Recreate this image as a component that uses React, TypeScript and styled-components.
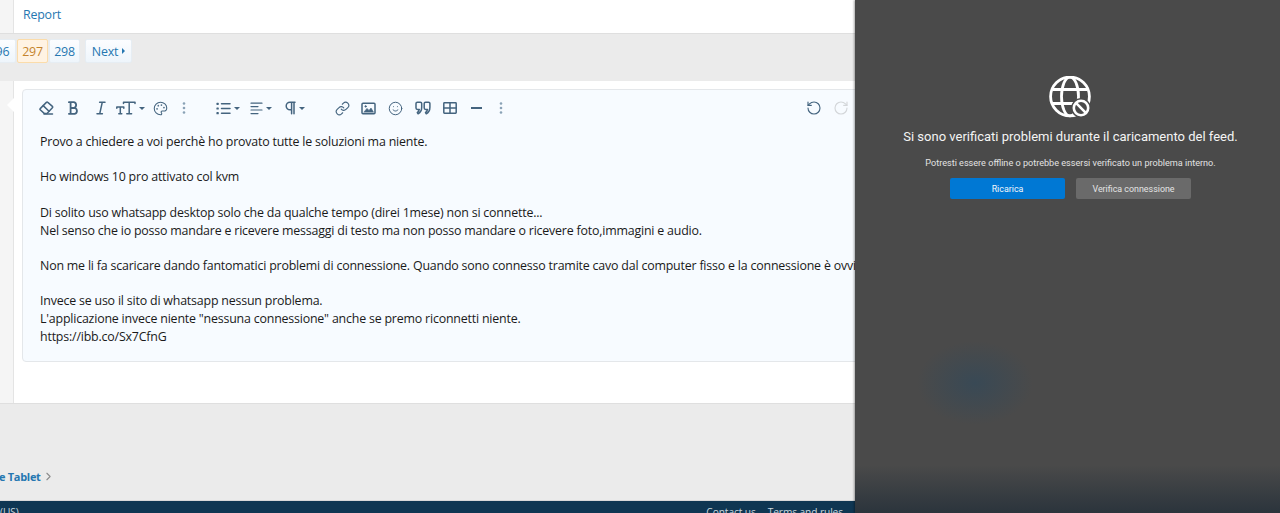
import styled, { createGlobalStyle } from "styled-components";
import { Palette, Link, Smile, RotateCcw, RotateCw, ChevronRight } from "lucide-react";
import type { ReactNode } from "react";

const GlobalStyle = createGlobalStyle`
  html, body {
    margin: 0;
    padding: 0;
    height: 513px;
    overflow: hidden;
    background: #ebebeb;
  }
`;

const Screen = styled.div`
  display: grid;
  grid-template-columns: 855px 425px;
  width: 1280px;
  height: 513px;
  overflow: hidden;
`;

const Forum = styled.div`
  display: flex;
  flex-direction: column;
  height: 513px;
  overflow: hidden;
  font-family: "Open Sans", "Liberation Sans", sans-serif;
  font-size: 12.4px;
  letter-spacing: -0.19px;
  color: #141414;
  background: #ebebeb;
`;

const MessageRow = styled.div<{ $height: number }>`
  display: flex;
  height: ${(p) => p.$height}px;
  flex: none;
  box-sizing: border-box;
  background: #fff;
  border-bottom: 1px solid #dfdfdf;
`;

const UserStrip = styled.div`
  position: relative;
  width: 13px;
  flex: none;
  background: #f5f5f5;
  border-right: 1px solid #e4e4e4;
`;

const Arrow = styled.div`
  position: absolute;
  left: 7px;
  top: 16px;
  width: 0;
  height: 0;
  border-top: 8px solid transparent;
  border-bottom: 8px solid transparent;
  border-right: 8px solid #fff;
`;

const MessageCell = styled.div`
  flex: 1;
  min-width: 0;
  padding: 8px 0 0 8px;
`;

const ReportLink = styled.a`
  display: block;
  margin-left: 1px;
  color: #2577b1;
  line-height: 13px;
`;

const PagerRow = styled.div`
  display: flex;
  height: 47px;
  flex: none;
  box-sizing: border-box;
  padding-top: 5px;
  gap: 4px;
`;

const PageGroup = styled.div`
  display: flex;
  height: 24px;
  margin-left: -18px;
`;

const PageButton = styled.span<{ $active?: boolean; $width: number }>`
  display: flex;
  align-items: center;
  justify-content: center;
  gap: 4px;
  width: ${(p) => p.$width}px;
  height: 24px;
  box-sizing: border-box;
  margin-right: 1px;
  border-radius: 2px;
  color: ${(p) => (p.$active ? "#c5842c" : "#2577b1")};
  background: ${(p) =>
    p.$active ? "#fff3e3" : "linear-gradient(to bottom, #fcfdff, #eef5fb)"};
  border: 1px solid ${(p) => (p.$active ? "#fbdcaa" : "#e6edf3")};
`;

const NextCaret = styled.span`
  width: 0;
  height: 0;
  border-top: 3px solid transparent;
  border-bottom: 3px solid transparent;
  border-left: 3px solid #2577b1;
`;

const EditorBox = styled.div`
  width: 850px;
  height: 273px;
  box-sizing: border-box;
  background: #f7fbff;
  border: 1px solid #e4e7ea;
  border-radius: 4px;
`;

const Toolbar = styled.div`
  display: flex;
  align-items: center;
  width: 821px;
  height: 36px;
  margin-left: 10px;
  color: #44647f;
`;

const ToolButton = styled.span<{ $width: number; $gapBefore?: number; $off?: boolean }>`
  display: flex;
  align-items: center;
  justify-content: center;
  gap: 3px;
  flex: none;
  width: ${(p) => p.$width}px;
  margin-left: ${(p) => p.$gapBefore ?? 0}px;
  color: ${(p) => (p.$off ? "#d3d6d9" : "inherit")};
`;

const ToolSpacer = styled.span`
  flex: 1;
`;

const Caret = styled.span`
  width: 0;
  height: 0;
  border-left: 3px solid transparent;
  border-right: 3px solid transparent;
  border-top: 3px solid currentColor;
`;

const EditorText = styled.div`
  padding: 7px 0 0 17px;
  line-height: 17.7px;
  white-space: pre;
  color: #1a1a1a;
`;

const Filler = styled.div`
  flex: 1;
`;

const Breadcrumb = styled.div`
  display: flex;
  align-items: center;
  height: 34px;
  flex: none;
  padding-bottom: 14px;
  box-sizing: border-box;
  margin-left: -1px;
  font-size: 11px;
  letter-spacing: -0.3px;
  font-weight: 700;
  color: #2577b1;
  svg {
    color: #8c8c8c;
    margin-left: 1px;
  }
`;

const Footer = styled.div`
  display: flex;
  justify-content: space-between;
  height: 9px;
  flex: none;
  padding: 3px 12px 0 0;
  border-top: 1px solid #d8d8d8;
  overflow: hidden;
  background: #0f3652;
  color: #c9d6df;
  font-size: 10.2px;
  letter-spacing: -0.1px;
  line-height: 16px;
`;

const FooterLinks = styled.div`
  display: flex;
  gap: 12px;
`;

const Flyout = styled.div`
  display: flex;
  flex-direction: column;
  align-items: center;
  height: 513px;
  box-sizing: border-box;
  padding: 76px 0 0 6px;
  color: #fff;
  font-family: Roboto, "Liberation Sans", sans-serif;
  box-shadow: -1px 0 2px rgba(0, 0, 0, 0.35);
  background:
    radial-gradient(ellipse 58px 42px at 120px 383px, rgba(40, 72, 96, 0.5), rgba(40, 72, 96, 0) 100%),
    linear-gradient(to bottom, rgba(43, 52, 60, 0) 465px, rgba(43, 52, 60, 1) 513px),
    #4a4a4a;
`;

const Headline = styled.div`
  margin-top: 10px;
  font-size: 13px;
  line-height: 18px;
  color: #f4f4f4;
`;

const Subline = styled.div`
  margin-top: 10px;
  font-size: 9.1px;
  line-height: 14px;
  color: #e2e2e2;
`;

const FeedActions = styled.div`
  display: flex;
  gap: 11px;
  margin-top: 8px;
`;

const FeedButton = styled.span<{ $primary?: boolean }>`
  display: flex;
  align-items: center;
  justify-content: center;
  width: 115px;
  height: 21px;
  border-radius: 2px;
  font-size: 8.9px;
  color: ${(p) => (p.$primary ? "#f2f7fc" : "#e4e4e4")};
  background: ${(p) => (p.$primary ? "#0078d4" : "#6a6a6a")};
`;

const stroke = {
  fill: "none",
  stroke: "currentColor",
  strokeWidth: 1.5,
  strokeLinecap: "round" as const,
  strokeLinejoin: "round" as const,
};

function Glyph({ w = 16, h = 16, children }: { w?: number; h?: number; children: ReactNode }) {
  return (
    <svg width={w} height={h} viewBox={`0 0 ${w} ${h}`} {...stroke}>
      {children}
    </svg>
  );
}

const Dots = () => (
  <svg width="4" height="12" viewBox="0 0 4 12" fill="#8aa2b6">
    <circle cx="2" cy="1.5" r="1.3" />
    <circle cx="2" cy="6" r="1.3" />
    <circle cx="2" cy="10.5" r="1.3" />
  </svg>
);

const EraserIcon = () => (
  <Glyph w={15} h={14}>
    <path d="M1.2 7.6 7.4 1.4a1 1 0 0 1 1.4 0l4.6 4a1 1 0 0 1 0 1.4L8 12.4H5.2L1.2 8.8a.8.8 0 0 1 0-1.2Z" />
    <path d="M4.2 4.6 10 10.2" />
    <path d="M5 13h8.5" />
  </Glyph>
);

const BoldIcon = () => (
  <svg width="11" height="14" viewBox="0 0 11 14" {...stroke} strokeWidth="1.8">
    <path d="M.9 1.2h5a3 3 0 0 1 0 5.8H2.6M2.6 1.2v11.6M.9 12.8h5.8a3 3 0 0 0 0-5.8H2.6" />
  </svg>
);

const ItalicIcon = () => (
  <Glyph w={10} h={14}>
    <path d="M3.6 1.2h5.4M1 12.8h5.4M6.3 1.2 3.7 12.8" />
  </Glyph>
);

const TextSizeIcon = () => (
  <Glyph w={20} h={14}>
    <path d="M7.5 2.6V1.2h11.5v1.4M13.2 1.2v11.6M10.8 12.8h4.8" />
    <path d="M.8 7.2V6h7v1.2M4.3 6v6.8M2.8 12.8h3" />
  </Glyph>
);

const ListIcon = () => (
  <Glyph w={15} h={13}>
    <path d="M5.5 1.8H14M5.5 6.5H14M5.5 11.2H14" />
    <path d="M1 1.3h1.2v1H1zM1 6h1.2v1H1zM1 10.7h1.2v1H1z" strokeWidth="1.2" />
  </Glyph>
);

const AlignIcon = () => (
  <Glyph w={13} h={13}>
    <path d="M1 1.2h11M1 4.6h7M1 8h11M1 11.6h7" strokeWidth="1.2" />
  </Glyph>
);

const PilcrowIcon = () => (
  <Glyph w={11} h={14}>
    <path d="M10 1.2H5a3.6 3.6 0 0 0 0 7.6h1.6M6.6 1.2v11.6M9 1.2v11.6" />
  </Glyph>
);

const ImageIcon = () => (
  <Glyph w={15} h={13}>
    <rect x="1" y="1.2" width="13" height="10.6" rx="1" />
    <path d="m3 10 3-3.6 2 2 2-2.4 2.4 4Z" fill="currentColor" strokeWidth="0.6" />
    <circle cx="4.6" cy="4.4" r="0.8" fill="currentColor" strokeWidth="0.6" />
  </Glyph>
);

const QuoteIcon = () => (
  <Glyph w={16} h={14}>
    <path d="M2.4 1.2h2.9a1.4 1.4 0 0 1 1.4 1.4v3.6c0 3-1.2 5.2-3.6 6.6l-.8-1.2c1.2-1 1.8-2 2-3.2H2.4A1.4 1.4 0 0 1 1 7V2.6a1.4 1.4 0 0 1 1.4-1.4Z" />
    <path d="M10.6 1.2h2.9a1.4 1.4 0 0 1 1.4 1.4v3.6c0 3-1.2 5.2-3.6 6.6l-.8-1.2c1.2-1 1.8-2 2-3.2h-1.9A1.4 1.4 0 0 1 9.2 7V2.6a1.4 1.4 0 0 1 1.4-1.4Z" />
  </Glyph>
);

const TableIcon = () => (
  <Glyph w={14} h={12}>
    <rect x="0.8" y="0.8" width="12.4" height="10.4" rx="0.6" />
    <path d="M0.8 6h12.4M7 .8v10.4" />
  </Glyph>
);

const MinusIcon = () => (
  <svg width="11" height="2" viewBox="0 0 11 2">
    <rect width="11" height="2" fill="currentColor" />
  </svg>
);

const GlobeBlocked = () => (
  <svg width="44" height="42" viewBox="0 0 44 42" fill="none" stroke="#fff" strokeWidth="2.8">
    <circle cx="21" cy="20.5" r="19.4" />
    <ellipse cx="21" cy="20.5" rx="8.5" ry="19.4" />
    <path d="M4 13.5h34M4 27.5h34" />
    <circle cx="32" cy="32" r="10" fill="#4a4a4a" stroke="none" />
    <circle cx="32" cy="32" r="7.2" strokeWidth="2.6" />
    <path d="m27.2 27.2 9.6 9.6" strokeWidth="2.6" />
  </svg>
);

const POST_TEXT = `Provo a chiedere a voi perchè ho provato tutte le soluzioni ma niente.

Ho windows 10 pro attivato col kvm

Di solito uso whatsapp desktop solo che da qualche tempo (direi 1mese) non si connette...
Nel senso che io posso mandare e ricevere messaggi di testo ma non posso mandare o ricevere foto,immagini e audio.

Non me li fa scaricare dando fantomatici problemi di connessione. Quando sono connesso tramite cavo dal computer fisso e la connessione è ovviamente attiva.

Invece se uso il sito di whatsapp nessun problema.
L'applicazione invece niente "nessuna connessione" anche se premo riconnetti niente.
https://ibb.co/Sx7CfnG`;

export default function App() {
  return (
    <Screen>
      <GlobalStyle />
      <Forum>
        <MessageRow $height={34}>
          <UserStrip />
          <MessageCell>
            <ReportLink>Report</ReportLink>
          </MessageCell>
        </MessageRow>

        <PagerRow>
          <PageGroup>
            <PageButton $width={34}>296</PageButton>
            <PageButton $width={31} $active>
              297
            </PageButton>
            <PageButton $width={31}>298</PageButton>
          </PageGroup>
          <PageButton $width={47}>
            Next
            <NextCaret />
          </PageButton>
        </PagerRow>

        <MessageRow $height={323}>
          <UserStrip>
            <Arrow />
          </UserStrip>
          <MessageCell>
            <EditorBox>
              <Toolbar>
                <ToolButton $width={27}><EraserIcon /></ToolButton>
                <ToolButton $width={27}><BoldIcon /></ToolButton>
                <ToolButton $width={27}><ItalicIcon /></ToolButton>
                <ToolButton $width={33}><TextSizeIcon /><Caret /></ToolButton>
                <ToolButton $width={26}><Palette size={15} strokeWidth={1.7} /></ToolButton>
                <ToolButton $width={22}><Dots /></ToolButton>
                <ToolButton $width={32} $gapBefore={17}><ListIcon /><Caret /></ToolButton>
                <ToolButton $width={34}><AlignIcon /><Caret /></ToolButton>
                <ToolButton $width={34}><PilcrowIcon /><Caret /></ToolButton>
                <ToolButton $width={26} $gapBefore={17}><Link size={15} strokeWidth={1.8} /></ToolButton>
                <ToolButton $width={27}><ImageIcon /></ToolButton>
                <ToolButton $width={27}><Smile size={15} strokeWidth={1.6} /></ToolButton>
                <ToolButton $width={27}><QuoteIcon /></ToolButton>
                <ToolButton $width={27}><TableIcon /></ToolButton>
                <ToolButton $width={27}><MinusIcon /></ToolButton>
                <ToolButton $width={21}><Dots /></ToolButton>
                <ToolSpacer />
                <ToolButton $width={27}><RotateCcw size={16} strokeWidth={1.7} /></ToolButton>
                <ToolButton $width={27} $off><RotateCw size={16} strokeWidth={1.7} /></ToolButton>
              </Toolbar>
              <EditorText>{POST_TEXT}</EditorText>
            </EditorBox>
          </MessageCell>
        </MessageRow>

        <Filler />
        <Breadcrumb>
          e Tablet
          <ChevronRight size={13} strokeWidth={2} />
        </Breadcrumb>
        <Footer>
          <span>(US)</span>
          <FooterLinks>
            <span>Contact us</span>
            <span>Terms and rules</span>
          </FooterLinks>
        </Footer>
      </Forum>

      <Flyout>
        <GlobeBlocked />
        <Headline>Si sono verificati problemi durante il caricamento del feed.</Headline>
        <Subline>Potresti essere offline o potrebbe essersi verificato un problema interno.</Subline>
        <FeedActions>
          <FeedButton $primary>Ricarica</FeedButton>
          <FeedButton>Verifica connessione</FeedButton>
        </FeedActions>
      </Flyout>
    </Screen>
  );
}
